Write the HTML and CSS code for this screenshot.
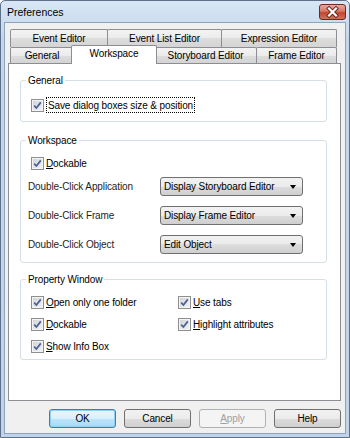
FILE: index.html
```html
<!DOCTYPE html>
<html lang="en">
<head>
    <meta charset="UTF-8">
    <title>Preferences</title>
    <link rel="stylesheet" href="styles.css">
</head>
<body>
    <div class="window">
        <div class="titlebar">
            <span class="title">Preferences</span>
            <span class="close-btn">
                <svg width="25" height="14" viewBox="0 0 25 14">
                    <path d="M9 3.5 L16 10.5 M16 3.5 L9 10.5" stroke="#6b2216" stroke-width="4" stroke-linecap="square"/>
                    <path d="M9 3.5 L16 10.5 M16 3.5 L9 10.5" stroke="#fff" stroke-width="2.2" stroke-linecap="square"/>
                </svg>
            </span>
        </div>

        <div class="client">
            <div class="tabs">
                <div class="tab-row">
                    <div class="tab tab-event">Event Editor</div>
                    <div class="tab tab-list">Event List Editor</div>
                    <div class="tab tab-expr">Expression Editor</div>
                </div>
                <div class="tab-row lower">
                    <div class="tab tab-general">General</div>
                    <div class="tab tab-workspace selected">Workspace</div>
                    <div class="tab tab-story">Storyboard Editor</div>
                    <div class="tab tab-frame">Frame Editor</div>
                </div>
            </div>

            <div class="panel">
                <fieldset class="group group-general">
                    <legend>General</legend>
                    <div class="group-body">
                        <div class="check-row">
                            <span class="checkbox"></span>
                            <span class="focus">Save dialog boxes size &amp; position</span>
                        </div>
                    </div>
                </fieldset>

                <fieldset class="group group-workspace">
                    <legend>Workspace</legend>
                    <div class="group-body">
                        <div class="check-row">
                            <span class="checkbox"></span>
                            <span><u>D</u>ockable</span>
                        </div>
                        <div class="select-rows">
                            <div class="select-row">
                                <span class="select-label">Double-Click Application</span>
                                <div class="select">Display Storyboard Editor<span class="arrow"></span></div>
                            </div>
                            <div class="select-row">
                                <span class="select-label">Double-Click Frame</span>
                                <div class="select">Display Frame Editor<span class="arrow"></span></div>
                            </div>
                            <div class="select-row">
                                <span class="select-label">Double-Click Object</span>
                                <div class="select">Edit Object<span class="arrow"></span></div>
                            </div>
                        </div>
                    </div>
                </fieldset>

                <fieldset class="group group-property">
                    <legend>Property Window</legend>
                    <div class="group-body check-grid">
                        <div class="check-row"><span class="checkbox"></span><span><u>O</u>pen only one folder</span></div>
                        <div class="check-row"><span class="checkbox"></span><span><u>U</u>se tabs</span></div>
                        <div class="check-row"><span class="checkbox"></span><span><u>D</u>ockable</span></div>
                        <div class="check-row"><span class="checkbox"></span><span><u>H</u>ighlight attributes</span></div>
                        <div class="check-row"><span class="checkbox"></span><span><u>S</u>how Info Box</span></div>
                    </div>
                </fieldset>
            </div>

            <div class="buttons">
                <button class="btn default">OK</button>
                <button class="btn">Cancel</button>
                <button class="btn disabled"><u>A</u>pply</button>
                <button class="btn">Help</button>
            </div>
        </div>
    </div>
</body>
</html>
```

FILE: styles.css
```css
body {
    margin: 0;
    font-family: "Liberation Sans", Arial, sans-serif;
    font-size: 10px;
    letter-spacing: -0.12px;
    color: #000;
    background: #fff;
}
.window {
    width: 350px;
    height: 438px;
    box-sizing: border-box;
    border: 1px solid #5f7189;
    border-radius: 5px 5px 0 0;
    background: linear-gradient(#d9e6f4, #c2d6ec 40px, #bfd3ea);
    display: flex;
    flex-direction: column;
}
.titlebar {
    height: 21px;
    display: flex;
    align-items: center;
    justify-content: space-between;
    padding: 0 3px 0 6px;
}
.title {
    font-size: 10.5px;
    letter-spacing: 0;
    color: #000;
}
.close-btn {
    width: 25px;
    height: 14px;
    margin-top: 1px;
    border: 1px solid #6e2a20;
    border-radius: 3px;
    background: linear-gradient(#e9a99a, #d47866 45%, #c2462f 55%, #d2705a);
    display: flex;
}
.client {
    flex: 1;
    margin: 0 3px 3px 3px;
    border: 1px solid #8fa3bd;
    background: #f0f0f0;
    display: flex;
    flex-direction: column;
    padding: 0 4px 5px 3px;
}
.tabs {
    margin-top: 6px;
    padding-left: 2px;
    position: relative;
    z-index: 2;
}
.tab-row {
    display: flex;
    height: 18px;
    align-items: flex-start;
}
.tab-row.lower {
    height: 16px;
}
.tab {
    box-sizing: border-box;
    height: 100%;
    border: 1px solid #8c8e94;
    border-bottom: none;
    border-radius: 2px 2px 0 0;
    background: linear-gradient(#f3f3f3, #ebebeb 50%, #dddddd 50%, #d4d4d4);
    display: flex;
    align-items: center;
    justify-content: center;
    white-space: nowrap;
    margin-left: -1px;
}
.tab:first-child {
    margin-left: 0;
}
.tab-event { width: 98px; }
.tab-list { width: 115px; }
.tab-expr { width: 116px; }
.tab-general { width: 64px; }
.tab-workspace { width: 82px; }
.tab-story { width: 103px; }
.tab-frame { width: 81px; }
.tab.selected {
    background: #fff;
    height: 19px;
    margin-top: -2px;
    margin-left: -3px;
    margin-right: -2px;
    width: 86px;
    padding-bottom: 3px;
    position: relative;
    z-index: 3;
}
.panel {
    height: 338px;
    box-sizing: border-box;
    background: #fff;
    border: 1px solid #8c8e94;
    padding: 0 13px 0 11px;
}
.group {
    margin: 0;
    padding: 0;
    border: 1px solid #d5dfe5;
    border-radius: 3px;
}
.group legend {
    margin-left: 5px;
    padding: 0 2px;
    line-height: 13px;
}
.group-general { margin-top: 10px; }
.group-workspace { margin-top: 12px; }
.group-property { margin-top: 10px; }
.group-general .group-body { padding: 9px 0 7px 10px; }
.group-workspace .group-body { padding: 7px 0 8px 10px; }
.group-property .group-body { padding: 7px 0 4px 10px; }
.check-row {
    height: 18px;
    display: flex;
    align-items: center;
    gap: 2px;
    white-space: nowrap;
}
.checkbox {
    width: 13px;
    height: 13px;
    box-sizing: border-box;
    border: 1px solid #8f8f8f;
    flex: none;
    background:
        url("data:image/svg+xml,%3Csvg xmlns='http://www.w3.org/2000/svg' width='11' height='11'%3E%3Cpath d='M2.2 5.6 L4.4 8 L8.8 2.4' fill='none' stroke='%234a5f97' stroke-width='1.7'/%3E%3C/svg%3E") center no-repeat,
        linear-gradient(135deg, #cfd2d6, #f4f4f4);
    box-shadow: inset 0 0 0 1px #f4f4f4;
}
.focus {
    outline: 1px dotted #000;
    padding: 2px 1px 1px 1px;
    margin-left: 1px;
}
.select-rows {
    margin-top: 5px;
    margin-left: -3px;
    display: flex;
    flex-direction: column;
    gap: 10px;
}
.select-row {
    display: flex;
    align-items: center;
    height: 19px;
}
.select-label {
    width: 132px;
    color: #1e1e1e;
}
.select {
    width: 143px;
    height: 19px;
    box-sizing: border-box;
    border: 1px solid #707070;
    border-radius: 3px;
    background: linear-gradient(#f2f2f2, #ebebeb 50%, #dddddd 50%, #cfcfcf);
    display: flex;
    align-items: center;
    justify-content: space-between;
    padding: 0 6px 0 3px;
}
.arrow {
    width: 0;
    height: 0;
    border-left: 3.5px solid transparent;
    border-right: 3.5px solid transparent;
    border-top: 4px solid #000;
}
.check-grid {
    display: grid;
    grid-template-columns: 147px 1fr;
    row-gap: 4px;
}
.buttons {
    margin-top: 8px;
    display: flex;
    justify-content: flex-end;
    gap: 8px;
    padding-right: 0;
}
.btn {
    width: 67px;
    height: 19px;
    font-family: inherit;
    font-size: 10px;
    letter-spacing: inherit;
    border: 1px solid #707070;
    border-radius: 3px;
    background: linear-gradient(#f2f2f2, #ebebeb 50%, #dddddd 50%, #cfcfcf);
    padding: 0;
    color: #000;
}
.btn.default {
    border-color: #3c7fb1;
    background: linear-gradient(#eaf6fd, #d9f0fc 50%, #bee6fd 50%, #a7d9f5);
    box-shadow: inset 0 0 0 1px #8fd0f2;
}
.btn.disabled {
    border-color: #adb2b5;
    background: #f4f4f4;
    color: #a0a0a0;
}
```
